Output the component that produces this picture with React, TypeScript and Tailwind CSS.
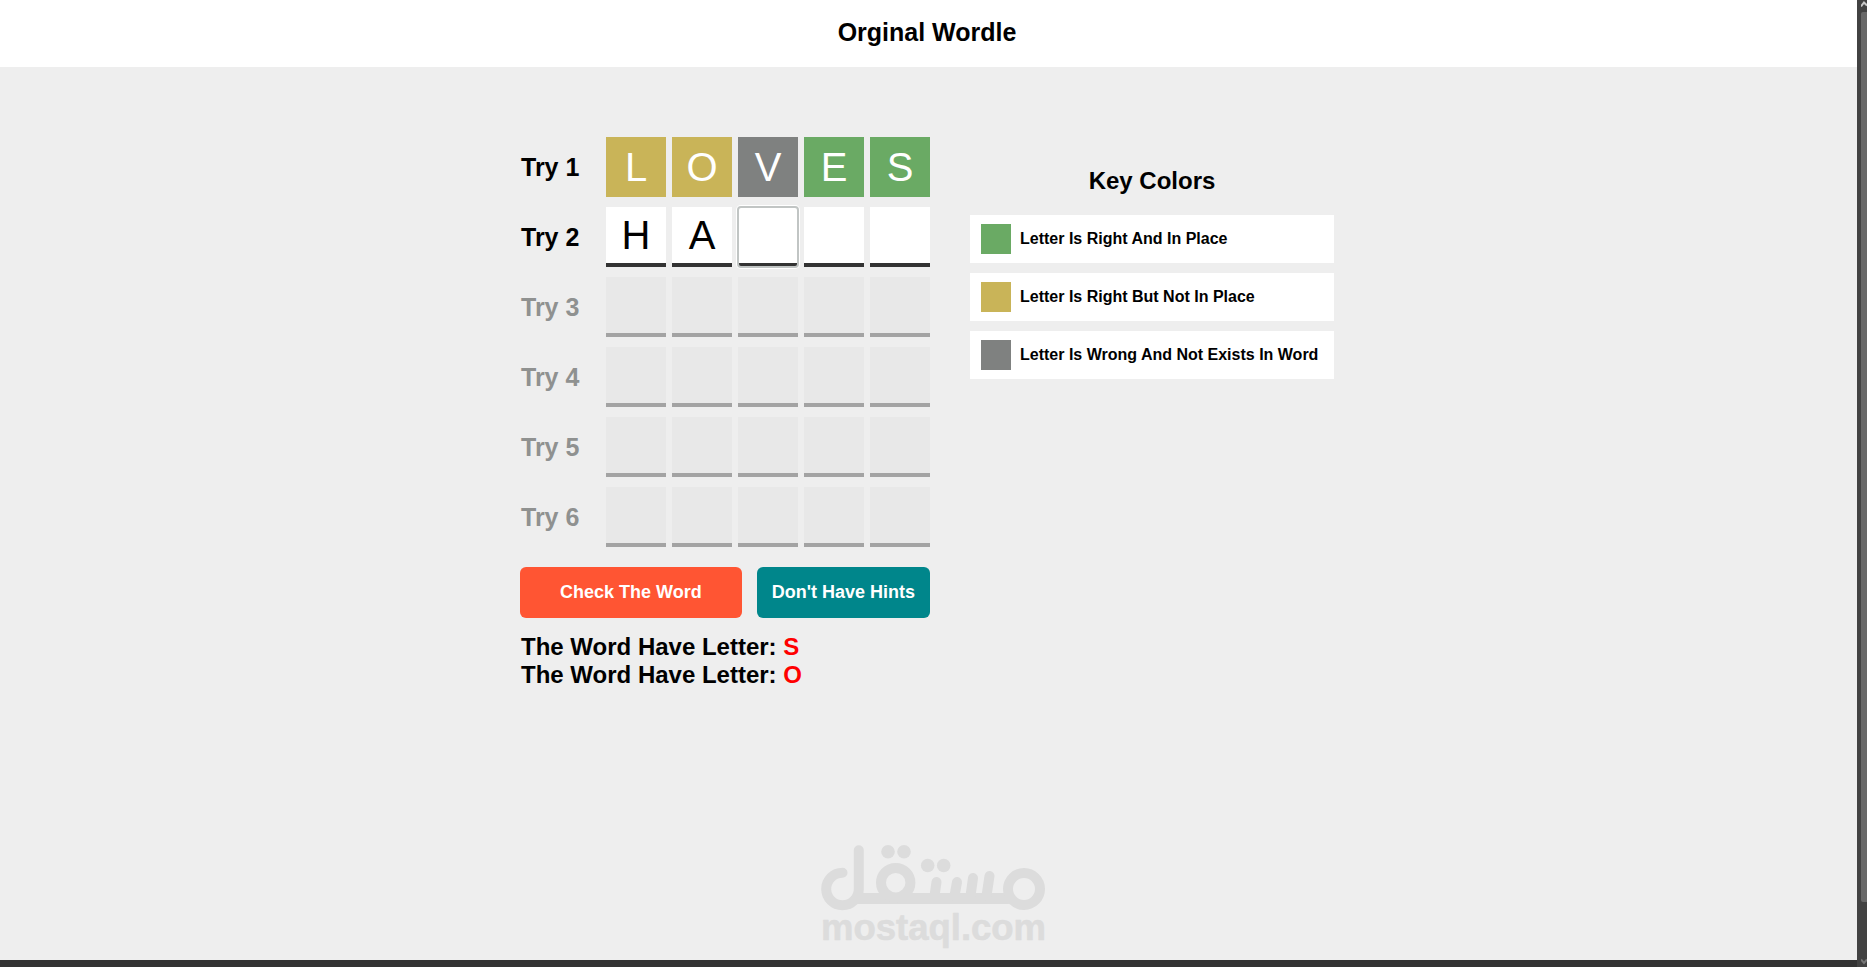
type Tone = "yellow" | "gray" | "green";

type Row = {
  state: "checked" | "active" | "locked";
  letters: string[];
  tones?: Tone[];
};

const rows: Row[] = [
  {
    state: "checked",
    letters: ["L", "O", "V", "E", "S"],
    tones: ["yellow", "yellow", "gray", "green", "green"],
  },
  { state: "active", letters: ["H", "A", "", "", ""] },
  { state: "locked", letters: ["", "", "", "", ""] },
  { state: "locked", letters: ["", "", "", "", ""] },
  { state: "locked", letters: ["", "", "", "", ""] },
  { state: "locked", letters: ["", "", "", "", ""] },
];

const toneClass: Record<Tone, string> = {
  yellow: "bg-[#c9b458]",
  gray: "bg-[#7f8180]",
  green: "bg-[#6aaa64]",
};

const keys: { tone: Tone; label: string }[] = [
  { tone: "green", label: "Letter Is Right And In Place" },
  { tone: "yellow", label: "Letter Is Right But Not In Place" },
  { tone: "gray", label: "Letter Is Wrong And Not Exists In Word" },
];

const hints = ["S", "O"];
const currentColumn = 2;

function cellClass(row: Row, column: number) {
  if (row.state === "checked" && row.tones) {
    return `text-white ${toneClass[row.tones[column]]}`;
  }
  if (row.state === "active") {
    const ring =
      column === currentColumn
        ? "rounded-[3px] outline-2 -outline-offset-1 outline-[#c1c5c4] shadow-[0_0_0_2px_#ffffff]"
        : "";
    return `border-b-4 border-[#333333] bg-white text-black ${ring}`;
  }
  return "border-b-4 border-[#a3a3a3] bg-[#e8e8e8]";
}

function TryRow({ row, index }: { row: Row; index: number }) {
  return (
    <div role="group" aria-labelledby={`try-${index}`} className="flex items-center justify-between">
      <span
        id={`try-${index}`}
        className={`pl-px text-[25px]/8 font-bold ${row.state === "locked" ? "text-[#8f9190]" : "text-black"}`}
      >
        Try {index}
      </span>
      <div className="flex gap-1.5">
        {row.letters.map((letter, column) => (
          <input
            key={column}
            type="text"
            maxLength={1}
            aria-label={`Try ${index} letter ${column + 1}`}
            defaultValue={letter}
            disabled={row.state !== "active"}
            className={`size-15 text-center text-[40px] uppercase ${cellClass(row, column)}`}
          />
        ))}
      </div>
    </div>
  );
}

function Watermark() {
  return (
    <svg
      viewBox="0 0 226 110"
      role="img"
      aria-label="mostaql.com"
      className="pointer-events-none absolute bottom-3 left-1/2 h-[110px] w-[226px] -translate-x-1/2"
    >
      <g fill="none" stroke="#dcdcdc" strokeWidth="10" strokeLinecap="round" strokeLinejoin="round">
        <path d="M21.500 27.700A16.300 16.300 0 1 0 37.800 44V5.200" />
        <path d="M36 53.500H187" strokeWidth="11" />
        <circle cx="74.700" cy="37.700" r="14.700" />
        <circle cx="203" cy="44" r="16" />
        <path d="M115.500 37L113.500 51M136 37L133.500 51M152 33L149.500 51M168.500 31L165.500 51" />
      </g>
      <g fill="#dcdcdc">
        <circle cx="67" cy="6.800" r="6.800" />
        <circle cx="83" cy="6.800" r="6.800" />
        <circle cx="106.700" cy="20.500" r="6.800" />
        <circle cx="122.700" cy="20.500" r="6.800" />
        <text
          x="112.500"
          y="94.500"
          textAnchor="middle"
          fontSize="36.500"
          fontWeight="700"
          stroke="#dcdcdc"
          strokeWidth="0.600"
          strokeLinejoin="round"
        >
          mostaql.com
        </text>
      </g>
    </svg>
  );
}

function ScrollTrack() {
  return (
    <div aria-hidden="true" className="flex w-2.5 shrink-0 flex-col bg-[#424242] pl-1">
      <svg viewBox="0 0 6 12" className="h-3 w-1.5">
        <path d="M0 6.500L3 2.500L6 5.500" fill="none" stroke="#c8c8c8" strokeWidth="2" />
      </svg>
      <div className="grow rounded-l-xs bg-[#686868]" />
      <div className="flex h-[65px] flex-col justify-end">
        <svg viewBox="0 0 6 12" className="h-3 w-1.5">
          <path d="M0 4.500L3 8L6 4.500" fill="none" stroke="#777777" strokeWidth="2" />
        </svg>
      </div>
    </div>
  );
}

export default function App() {
  return (
    <div className="relative flex min-h-screen bg-[#eeeeee] font-['Liberation_Sans',Arial,sans-serif] text-black">
      <div className="flex grow flex-col">
        <header className="bg-white pt-4 pr-[3px] pb-[19px] text-center">
          <h1 className="text-[25px]/8 font-bold">Orginal Wordle</h1>
        </header>

        <main className="flex grow items-start justify-center gap-10 pt-[70px] pr-[3px]">
          <section className="w-[410px]">
            <div className="flex flex-col gap-2.5">
              {rows.map((row, i) => (
                <TryRow key={i} row={row} index={i + 1} />
              ))}
            </div>
            <div className="mt-5 flex gap-[15px] text-lg font-bold text-white">
              <button type="button" className="h-[51px] grow rounded-md bg-[#ff5533] pb-0.5">
                Check The Word
              </button>
              <button type="button" className="h-[51px] rounded-md bg-[#00868b] px-[15px] pb-0.5">
                Don't Have Hints
              </button>
            </div>
            <div className="mt-[15px] pl-px text-2xl/7 font-bold">
              {hints.map((letter) => (
                <p key={letter}>
                  The Word Have Letter: <span className="text-[#ff0000]">{letter}</span>
                </p>
              ))}
            </div>
          </section>

          <section className="w-[364px] pt-7">
            <h2 className="text-center text-2xl font-bold">Key Colors</h2>
            <ul className="mt-[18px] flex flex-col gap-2.5">
              {keys.map((key) => (
                <li key={key.tone} className="flex h-12 items-center gap-[9px] bg-white px-[11px] font-bold">
                  <span className={`size-7.5 shrink-0 ${toneClass[key.tone]}`} />
                  {key.label}
                </li>
              ))}
            </ul>
          </section>
        </main>

        <footer className="h-[7px] bg-[#333333]" />
      </div>
      <ScrollTrack />
      <Watermark />
    </div>
  );
}
